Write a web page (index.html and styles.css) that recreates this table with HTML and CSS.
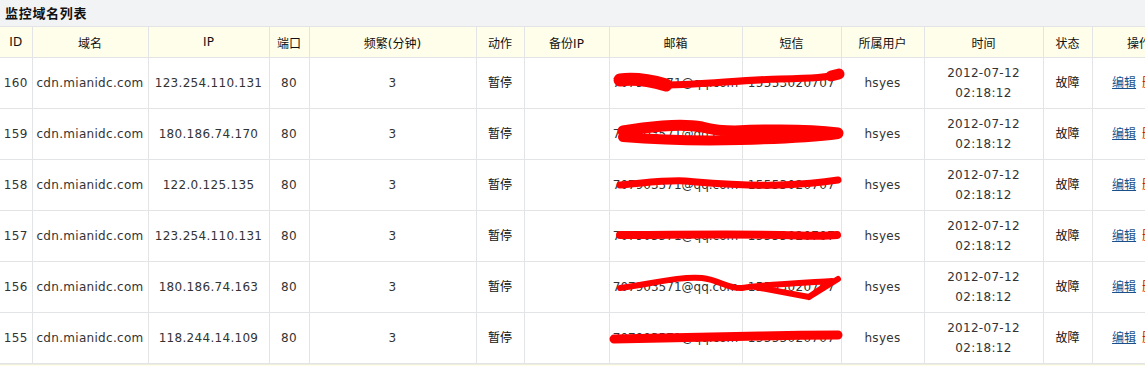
FILE: index.html
```html
<!DOCTYPE html>
<html lang="zh">
<head>
<meta charset="utf-8">
<title>监控域名列表</title>
<link rel="stylesheet" href="styles.css">
</head>
<body>
<div class="title">监控域名列表</div>
<table class="grid">
  <colgroup>
    <col class="c-id"><col class="c-domain"><col class="c-ip"><col class="c-port"><col class="c-freq"><col class="c-act"><col class="c-bip"><col class="c-mail"><col class="c-sms"><col class="c-user"><col class="c-time"><col class="c-state"><col class="c-op">
  </colgroup>
  <thead>
    <tr><th>ID</th><th>域名</th><th>IP</th><th>端口</th><th>频繁(分钟)</th><th>动作</th><th>备份IP</th><th>邮箱</th><th>短信</th><th>所属用户</th><th>时间</th><th>状态</th><th>操作</th></tr>
  </thead>
  <tbody>
    <tr>
      <td>160</td><td>cdn.mianidc.com</td><td>123.254.110.131</td><td>80</td><td>3</td><td class="cn">暂停</td><td></td>
      <td class="mail">707903571@qq.com<svg class="scribble" viewBox="0 0 240 51" width="240" height="51"><path d="M10 22 C25 20 42 23 56 27" stroke-width="13"/><path d="M56 27 C90 27 130 22 170 21 S215 19 228 17" stroke-width="7"/><path d="M221 18 L229 16" stroke-width="11"/></svg></td>
      <td>15553020707</td><td>hsyes</td><td>2012-07-12<br>02:18:12</td><td class="cn">故障</td><td class="op"><a href="#">编辑</a> <span class="del">删除</span></td>
    </tr>
    <tr>
      <td>159</td><td>cdn.mianidc.com</td><td>180.186.74.170</td><td>80</td><td>3</td><td class="cn">暂停</td><td></td>
      <td class="mail">707903571@qq.com<svg class="scribble" viewBox="0 0 240 51" width="240" height="51"><path d="M13 22 C35 18 70 14 92 18 C104 21 112 22 125 22 C170 20 205 21 228 24" stroke-width="11"/><path d="M13 28 C50 31 90 32 130 31 C170 30 205 28 228 25" stroke-width="10"/></svg></td>
      <td>15553020707</td><td>hsyes</td><td>2012-07-12<br>02:18:12</td><td class="cn">故障</td><td class="op"><a href="#">编辑</a> <span class="del">删除</span></td>
    </tr>
    <tr>
      <td>158</td><td>cdn.mianidc.com</td><td>122.0.125.135</td><td>80</td><td>3</td><td class="cn">暂停</td><td></td>
      <td class="mail">707903571@qq.com<svg class="scribble" viewBox="0 0 240 51" width="240" height="51"><path d="M10 25 C35 23 55 20 75 21 C100 23 130 26 170 25 C200 24 215 22 228 20" stroke-width="7"/></svg></td>
      <td>15553020707</td><td>hsyes</td><td>2012-07-12<br>02:18:12</td><td class="cn">故障</td><td class="op"><a href="#">编辑</a> <span class="del">删除</span></td>
    </tr>
    <tr>
      <td>157</td><td>cdn.mianidc.com</td><td>123.254.110.131</td><td>80</td><td>3</td><td class="cn">暂停</td><td></td>
      <td class="mail">707903571@qq.com<svg class="scribble" viewBox="0 0 240 51" width="240" height="51"><path d="M10 24 C60 24 120 23 170 24 C200 25 218 25 227 24" stroke-width="8"/></svg></td>
      <td>15553020707</td><td>hsyes</td><td>2012-07-12<br>02:18:12</td><td class="cn">故障</td><td class="op"><a href="#">编辑</a> <span class="del">删除</span></td>
    </tr>
    <tr>
      <td>156</td><td>cdn.mianidc.com</td><td>180.186.74.163</td><td>80</td><td>3</td><td class="cn">暂停</td><td></td>
      <td class="mail">707903571@qq.com<svg class="scribble" viewBox="0 0 240 51" width="240" height="51"><path d="M10 26 C40 22 70 14 92 16 C110 18 118 27 132 26 C150 23 190 21 222 19 L199 35 L145 25 M199 35 L228 17" stroke-width="6"/></svg></td>
      <td>15553020707</td><td>hsyes</td><td>2012-07-12<br>02:18:12</td><td class="cn">故障</td><td class="op"><a href="#">编辑</a> <span class="del">删除</span></td>
    </tr>
    <tr>
      <td>155</td><td>cdn.mianidc.com</td><td>118.244.14.109</td><td>80</td><td>3</td><td class="cn">暂停</td><td></td>
      <td class="mail">707903571@qq.com<svg class="scribble" viewBox="0 0 240 51" width="240" height="51"><path d="M4 26 C50 25 100 24 150 23 C190 22 215 22 228 22" stroke-width="9"/></svg></td>
      <td>15553020707</td><td>hsyes</td><td>2012-07-12<br>02:18:12</td><td class="cn">故障</td><td class="op"><a href="#">编辑</a> <span class="del">删除</span></td>
    </tr>
  </tbody>
</table>
<div class="foot"></div>
</body>
</html>
```
FILE: styles.css
```css
html, body {
  margin: 0;
  padding: 0;
  overflow: hidden;
  background: #ffffff;
}
body {
  font-family: "DejaVu Sans", "Noto Sans CJK SC", sans-serif;
  font-size: 12px;
  color: #222222;
}
.title {
  height: 26px;
  line-height: 26px;
  padding-left: 5px;
  background: #f2f3f5;
  font-family: "Noto Sans CJK SC", sans-serif;
  font-weight: bold;
  font-size: 13px;
  letter-spacing: 0.7px;
  color: #111111;
}
.grid {
  border-collapse: collapse;
  table-layout: fixed;
  width: 1186px;
  border-top: 1px solid #e3e4e6;
}
.c-id { width: 32px; }
.c-domain { width: 116px; }
.c-ip { width: 121px; }
.c-port { width: 40px; }
.c-freq { width: 167px; }
.c-act { width: 48px; }
.c-bip { width: 85px; }
.c-mail { width: 133px; }
.c-sms { width: 99px; }
.c-user { width: 83px; }
.c-time { width: 119px; }
.c-state { width: 49px; }
.c-op { width: 94px; }
.grid th, .grid td {
  border: 1px solid #e3e4e6;
  padding: 0;
  text-align: center;
  vertical-align: middle;
  white-space: nowrap;
}
.grid tr > :first-child { border-left: none; }
.grid th {
  height: 30px;
  background: #fffeea;
  font-weight: normal;
  color: #111111;
}
.grid td {
  height: 50px;
  line-height: 20px;
  letter-spacing: 0.3px;
  color: #333333;
}
.grid td.cn {
  color: #111111;
  letter-spacing: 0;
}
.grid td.mail {
  position: relative;
  letter-spacing: 0;
}
.scribble {
  position: absolute;
  left: 0;
  top: 0;
  overflow: visible;
  z-index: 2;
}
.scribble path {
  fill: none;
  stroke: #ff0000;
  stroke-linecap: round;
  stroke-linejoin: round;
}
.grid td.op {
  letter-spacing: 0;
}
.op a {
  color: #1b4f8a;
  text-decoration: underline;
}
.op .del {
  color: #cc0000;
  margin-left: 2px;
}
.foot {
  height: 6px;
  background: #fffeea;
  border-top: 1px solid #eeeedd;
}
```
